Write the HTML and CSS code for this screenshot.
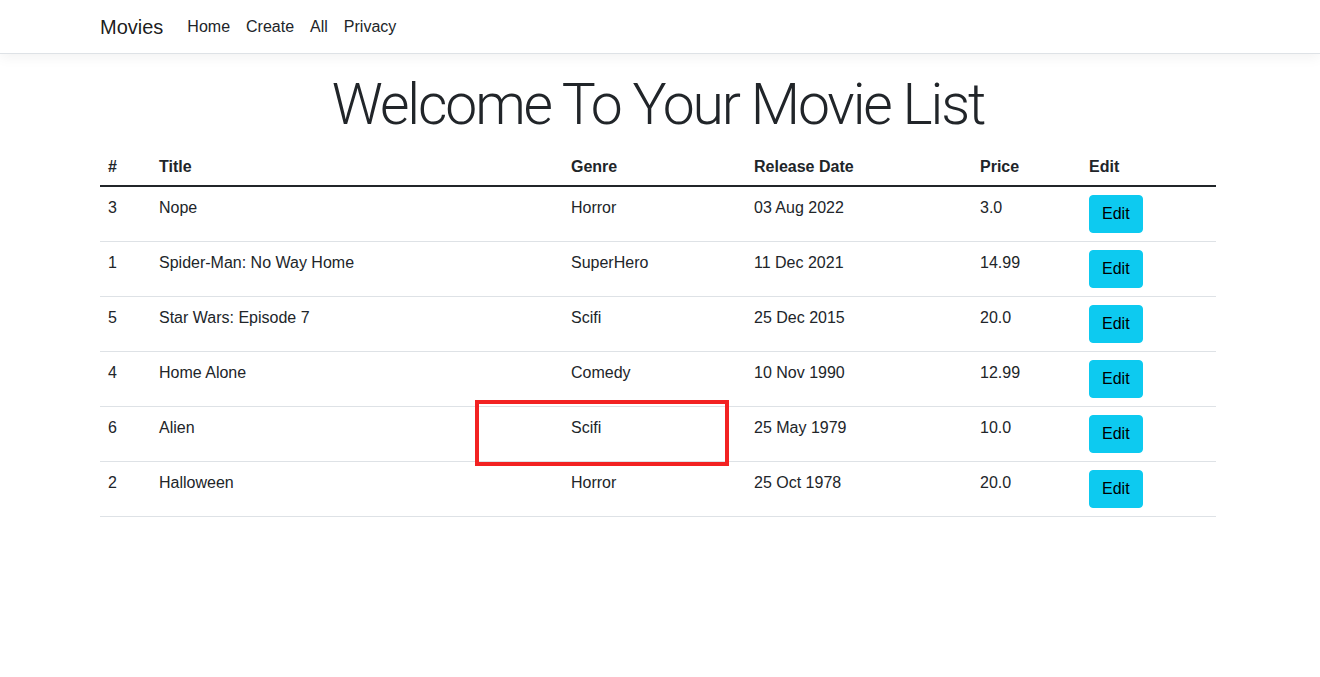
FILE: index.html
```html
<!DOCTYPE html>
<html lang="en">
<head>
<meta charset="utf-8">
<title>Movies</title>
<link rel="stylesheet" href="styles.css">
</head>
<body>
<header class="navbar">
  <div class="wrap nav-inner">
    <a class="brand" href="#">Movies</a>
    <nav class="nav-links">
      <a href="#">Home</a>
      <a href="#">Create</a>
      <a href="#">All</a>
      <a href="#">Privacy</a>
    </nav>
  </div>
</header>
<main class="wrap main">
  <h1 class="display">Welcome To Your Movie List</h1>
  <table class="movies">
    <thead>
      <tr>
        <th class="c-id">#</th>
        <th class="c-title">Title</th>
        <th class="c-genre">Genre</th>
        <th class="c-date">Release Date</th>
        <th class="c-price">Price</th>
        <th class="c-edit">Edit</th>
      </tr>
    </thead>
    <tbody>
      <tr><td>3</td><td>Nope</td><td>Horror</td><td>03 Aug 2022</td><td>3.0</td><td><a class="btn" href="#">Edit</a></td></tr>
      <tr><td>1</td><td>Spider-Man: No Way Home</td><td>SuperHero</td><td>11 Dec 2021</td><td>14.99</td><td><a class="btn" href="#">Edit</a></td></tr>
      <tr><td>5</td><td>Star Wars: Episode 7</td><td>Scifi</td><td>25 Dec 2015</td><td>20.0</td><td><a class="btn" href="#">Edit</a></td></tr>
      <tr><td>4</td><td>Home Alone</td><td>Comedy</td><td>10 Nov 1990</td><td>12.99</td><td><a class="btn" href="#">Edit</a></td></tr>
      <tr><td>6</td><td>Alien</td><td>Scifi</td><td>25 May 1979</td><td>10.0</td><td><a class="btn" href="#">Edit</a></td></tr>
      <tr><td>2</td><td>Halloween</td><td>Horror</td><td>25 Oct 1978</td><td>20.0</td><td><a class="btn" href="#">Edit</a></td></tr>
    </tbody>
  </table>
</main>
<div class="highlight"></div>
</body>
</html>
```
FILE: styles.css
```css
html, body {
  margin: 0;
  padding: 0;
}
body {
  font-family: "Liberation Sans", Arial, sans-serif;
  font-size: 16px;
  line-height: 1.5;
  color: #212529;
  background: #fff;
}
a {
  color: inherit;
  text-decoration: none;
}
.wrap {
  width: 1116px;
  margin-left: 100px;
}
.navbar {
  height: 54px;
  border-bottom: 1px solid #dee2e6;
  box-shadow: 0 4px 12px rgba(0, 0, 0, 0.05);
  box-sizing: border-box;
  background: #fff;
}
.nav-inner {
  display: flex;
  align-items: center;
  height: 53px;
}
.brand {
  font-size: 20px;
  line-height: 30px;
  margin-right: 16px;
  color: rgba(0, 0, 0, 0.9);
}
.nav-links {
  display: flex;
}
.nav-links a {
  padding: 0 8px;
  line-height: 24px;
  color: #212529;
}
.main {
  padding-top: 17px;
}
.display {
  margin: 0 0 8px;
  font-family: Roboto, "Liberation Sans", sans-serif;
  font-size: 57px;
  font-weight: 300;
  letter-spacing: -2.1px;
  line-height: 67px;
  text-align: center;
}
.movies {
  width: 1116px;
  border-collapse: collapse;
  table-layout: fixed;
}
.movies th,
.movies td {
  box-sizing: border-box;
  padding: 9px 8px 7px;
  text-align: left;
  vertical-align: top;
  border-bottom: 1px solid #dee2e6;
}
.movies th {
  font-weight: 700;
  border-bottom: 2px solid #212529;
  padding-bottom: 6px;
}
.movies td:last-child {
  padding-top: 8px;
  padding-bottom: 8px;
}
.c-id { width: 51px; }
.c-title { width: 412px; }
.c-genre { width: 183px; }
.c-date { width: 226px; }
.c-price { width: 109px; }
.c-edit { width: 135px; }
.btn {
  display: inline-block;
  padding: 6px 12px;
  line-height: 24px;
  border: 1px solid #0dcaf0;
  border-radius: 4px;
  background: #0dcaf0;
  color: #000;
}
.highlight {
  position: absolute;
  left: 475px;
  top: 400px;
  width: 246px;
  height: 58px;
  border: 4px solid #f22222;
}
```
